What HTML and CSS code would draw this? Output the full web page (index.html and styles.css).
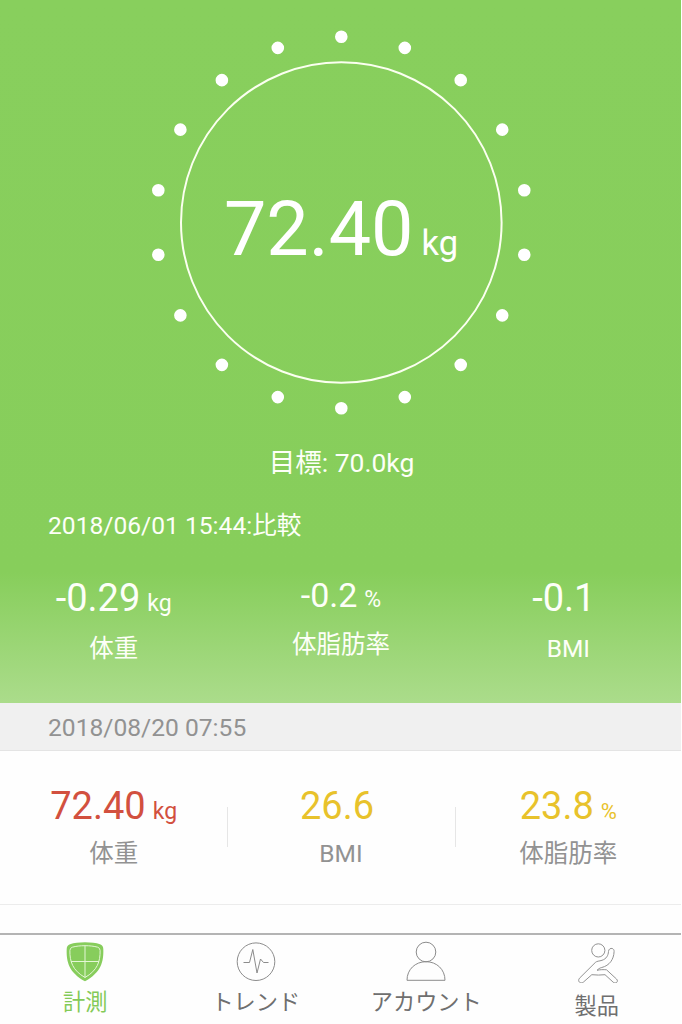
FILE: index.html
```html
<!DOCTYPE html>
<html lang="ja">
<head>
  <meta charset="utf-8">
  <meta name="viewport" content="width=device-width, initial-scale=1">
  <title>計測</title>
  <link rel="stylesheet" href="styles.css">
</head>
<body>
  <div class="screen">

    <section class="hero">
      <div class="gauge">
        <svg class="gauge-ring" viewBox="0 0 400 400" width="400" height="400">
          <circle cx="200.3" cy="200.5" r="160.3" fill="none" stroke="#fbfff0" stroke-width="2"/>
          <!-- 18 dots, 20deg apart -->
          <circle cx="200.3" cy="200.5" r="185.8" fill="none" stroke="#fff" stroke-width="12.6" stroke-linecap="round" pathLength="18" stroke-dasharray="0 1" transform="rotate(-90 200.3 200.5)"/>
        </svg>
        <div class="reading">72.40<span class="reading-unit">kg</span></div>
      </div>

      <p class="goal">目標: 70.0kg</p>
      <p class="compare-date">2018/06/01 15:44:比較</p>

      <div class="stats compare">
        <div class="stat">
          <div class="value">-0.29<span class="unit">kg</span></div>
          <div class="label">体重</div>
        </div>
        <div class="stat stat-small">
          <div class="value">-0.2<span class="unit">%</span></div>
          <div class="label">体脂肪率</div>
        </div>
        <div class="stat">
          <div class="value value-bmi">-0.1</div>
          <div class="label">BMI</div>
        </div>
      </div>
    </section>

    <div class="date-bar">2018/08/20 07:55</div>

    <section class="stats record">
      <div class="stat">
        <div class="value red">72.40<span class="unit">kg</span></div>
        <div class="label">体重</div>
      </div>
      <div class="stat">
        <div class="value yellow value-mid">26.6</div>
        <div class="label">BMI</div>
      </div>
      <div class="stat">
        <div class="value yellow">23.8<span class="unit percent">%</span></div>
        <div class="label">体脂肪率</div>
      </div>
    </section>

    <nav class="tabs">
      <a class="tab active">
        <svg width="42" height="42" viewBox="0 0 42 42">
          <path d="M21 1.3C27 1.3 32 2 36 3.2C38.2 4 39.2 5.4 39.3 8C39.8 21 37 31.5 21 40.3C5 31.5 2.2 21 2.7 8C2.8 5.4 3.8 4 6 3.2C10 2 15 1.3 21 1.3Z" fill="#87cd5c"/>
          <path d="M21 4.7C26 4.7 30 5.2 33.7 6.2Q36 6.9 36.1 9.5C36.3 20.5 33.5 29.3 21 36.5C8.5 29.3 5.7 20.5 5.9 9.5Q6 6.9 8.3 6.2C12 5.2 16 4.7 21 4.7ZM21 4.7V36.5M7 20.5H35" fill="none" stroke="#e4f6d5" stroke-width="1"/>
        </svg>
        <span>計測</span>
      </a>
      <a class="tab">
        <svg width="42" height="42" viewBox="0 0 42 42" fill="none" stroke="#8c8c8c" stroke-width="1">
          <circle cx="21" cy="20.7" r="18.8"/>
          <path d="M8.5 21.5H14.5L17.8 8.5L22 32L25.5 18L28.5 21.5H33.5"/>
        </svg>
        <span>トレンド</span>
      </a>
      <a class="tab">
        <svg width="42" height="42" viewBox="0 0 42 42" fill="none" stroke="#8c8c8c" stroke-width="1">
          <circle cx="21" cy="11" r="9.8"/>
          <path d="M2 39.3C2 28.5 10.2 20.7 21 20.7S40 28.5 40 39.3Z"/>
        </svg>
        <span>アカウント</span>
      </a>
      <a class="tab tab-low">
        <svg width="42" height="42" viewBox="0 0 42 42" fill="none" stroke="#929292" stroke-width="1">
          <circle cx="22.3" cy="9.4" r="6.6"/>
          <path d="M32.5 10.5C32.7 6.3 38.3 6.4 38.1 10.5C37.8 18.5 33.5 24.5 25.8 26.5C23.5 27 22.5 28 21 29.3C24 28.6 27.500 28.500 30.500 28.800L40.500 38C43 40.600 39.700 43.300 37.200 41.200L29 33.700C25 34.200 20 34.200 15.800 33.700L7.300 41.200C4.500 43.300 1 40.200 3.500 37.200L19.300 21.500C21 19.900 23 20.300 26 19.300C30.500 17.800 32.200 14.500 32.500 10.500Z"/>
        </svg>
        <span>製品</span>
      </a>
    </nav>

  </div>
</body>
</html>
```
FILE: styles.css
```css
* {
  box-sizing: border-box;
}

body {
  margin: 0;
  background-color: #fff;
  font-family: Roboto, "Noto Sans CJK JP", sans-serif;
}

p {
  margin: 0;
}

.screen {
  width: 681px;
  height: 1024px;
  display: flex;
  flex-direction: column;
  overflow: hidden;
  background-color: #fefefe;
}

.hero {
  height: 703px;
  color: #fdfff8;
  background: linear-gradient(#88cf5d 0, #87ce5b 572px, #abdc8b 703px);
}

.gauge {
  display: grid;
  justify-content: center;
  height: 443px;
  padding-top: 22px;
  padding-left: 1px;
}

.gauge-ring,
.reading {
  grid-area: 1 / 1;
}

.reading {
  margin-top: 162px;
  font-size: 75.5px;
  line-height: 90px;
  height: 90px;
  text-align: center;
  color: #fff;
}

.reading-unit {
  font-size: 34.5px;
  margin-left: 8px;
}

.goal {
  padding-left: 2px;
  font-size: 26.5px;
  line-height: 40px;
  text-align: center;
}

.compare-date {
  margin-top: 25px;
  padding-left: 48px;
  font-size: 24.6px;
  line-height: 36px;
}

.stats {
  display: grid;
  grid-template-columns: repeat(3, 1fr);
  margin-right: -1px;
}

.stat {
  text-align: center;
}

.value {
  font-size: 38px;
  line-height: 46px;
  height: 46px;
}

.unit {
  font-size: 23px;
  margin-left: 7px;
}

.label {
  font-size: 24.5px;
  line-height: 34px;
}

.compare {
  padding-top: 31px;
}

.compare .label {
  margin-top: 11px;
}

.stat-small {
  margin-top: -3px;
}

.stat-small .value {
  font-size: 34px;
}

.compare .stat-small .label {
  margin-top: 10px;
}

.value-bmi {
  padding-right: 9px;
}

.date-bar {
  height: 48px;
  padding-left: 48px;
  font-size: 24.6px;
  line-height: 49px;
  color: #929292;
  background-color: #f0f0f0;
  border-bottom: 1px solid #e4e4e4;
}

.record {
  height: 154px;
  padding-top: 32px;
  border-bottom: 1px solid #ececec;
}

.record .stat {
  position: relative;
}

.record .stat + .stat::before {
  content: "";
  position: absolute;
  left: 0;
  top: 24px;
  width: 1px;
  height: 40px;
  background-color: #e6e6e6;
}

.record .label {
  margin-top: 8px;
  color: #929292;
}

.value-mid {
  padding-right: 8px;
}

.red {
  color: #d2503f;
}

.yellow {
  color: #e8c22b;
}

.percent {
  font-size: 22px;
}

.tabs {
  margin-top: 28px;
  margin-right: -1px;
  height: 91px;
  display: grid;
  grid-template-columns: repeat(4, 1fr);
  border-top: 2px solid #b4b4b4;
  padding-top: 6px;
}

.tab {
  display: flex;
  flex-direction: column;
  align-items: center;
  color: #6f6f6f;
  font-size: 22.2px;
  line-height: 32px;
}

.tab span {
  margin-top: 3px;
}

.tab-low span {
  margin-top: 7px;
}

.active {
  color: #83ca57;
}
```
